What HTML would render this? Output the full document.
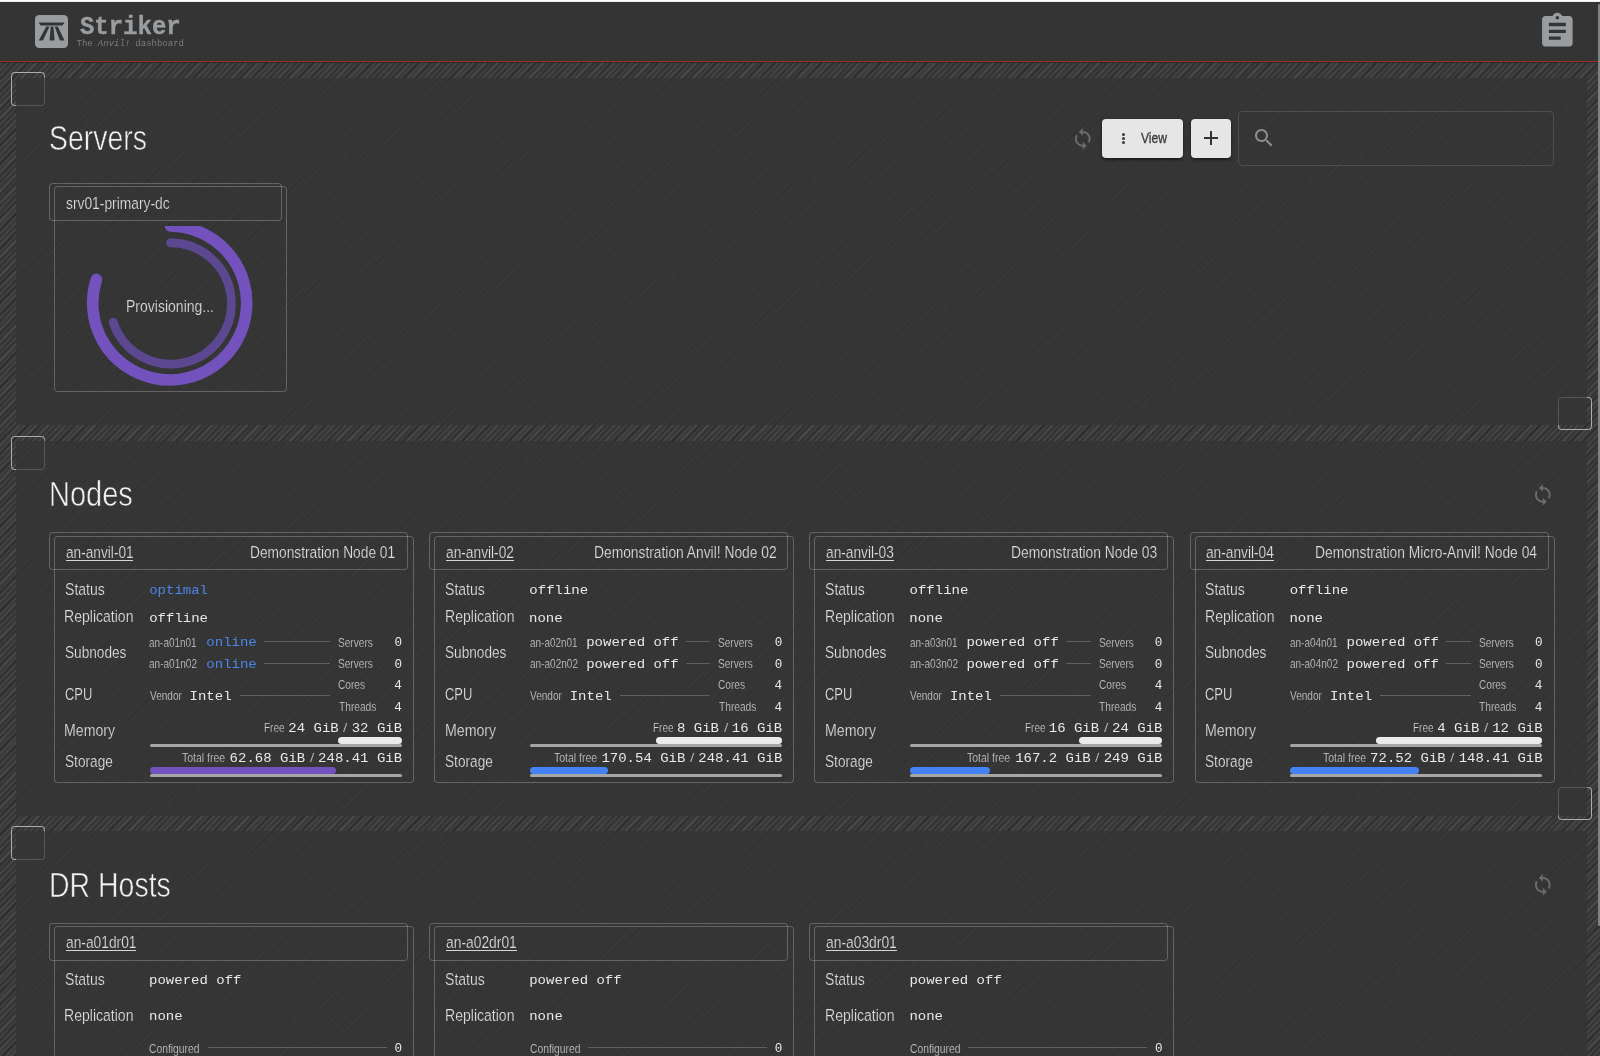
<!DOCTYPE html>
<html lang="en"><head><meta charset="utf-8"><title>Striker - Dashboard</title>
<style>
:root{--pbg:#353535}
html,body{margin:0;padding:0;background:#383838;}
body{width:1600px;height:1056px;overflow:hidden;position:relative;font-family:"Liberation Sans",sans-serif;}
#root{position:absolute;left:0;top:0;width:1600px;height:1056px;overflow:hidden;will-change:transform;}
#root>*{position:absolute;}
#stripes{left:0;top:0;width:1600px;height:1056px;
 background:
  repeating-linear-gradient(138deg, rgba(255,255,255,0.03) 0, rgba(0,0,0,0.045) 3.7px, rgba(255,255,255,0.03) 7.9px),
  repeating-linear-gradient(131deg, rgba(255,255,255,0.03) 0, rgba(0,0,0,0.07) 5.5px, rgba(255,255,255,0.03) 11.3px),
  repeating-linear-gradient(134deg, #2f2f2f 0, #313131 1.1px, #434343 2.3px, #414141 2.9px, #2f2f2f 4.2px);}
.panel{background:rgba(52,52,52,0.84);}
.sq{box-sizing:border-box;width:34px;height:34px;border:1px solid rgba(255,255,255,0.17);border-radius:3.5px;}
.sq.b{border-color:#adadad;}
#hdr{left:0;top:2px;width:1600px;height:59px;background:#343434;}
#redline{left:0;top:61px;width:1600px;height:2.4px;background:linear-gradient(#a72d2b 0,#a72d2b 1.1px,#202626 1.3px,rgba(32,38,38,0) 2.4px);}
#topwhite{left:0;top:0;width:1600px;height:2px;background:linear-gradient(#fff 0,#fff 1.4px,#9b9b9b 2px);}
#logo{left:35px;top:15px;}
.t{white-space:pre;display:block;font-family:"Liberation Sans",sans-serif;}
.t.m{font-family:"Liberation Mono","Liberation Sans",sans-serif;}
.ul{height:1px;background:#d6d6d6;}
.hv{-webkit-text-stroke:0.35px #3d3d3d;}
.cb{box-sizing:border-box;border:1px solid rgba(255,255,255,0.235);border-radius:3.5px;}
.ln{background:#606060;}
.gbar{background:#a6a6a6;border-radius:2px;}
.wbar{background:#ebebeb;border-radius:3.5px;}
.btn{background:#e6e6e6;border-radius:4px;box-shadow:0 2px 2px rgba(0,0,0,0.35),0 1px 4px rgba(0,0,0,0.25);}
.dot{width:3.1px;height:3.1px;border-radius:50%;background:#3a3a3a;}
.plus{background:#333;}
.field{box-sizing:border-box;border:1px solid #4e4e4e;border-radius:4px;}
#sb{left:1597.6px;top:4px;width:2.4px;height:922.4px;background:#808486;border-radius:1.5px 0 0 1.5px;}
</style></head>
<body><div id="root">
<div id="stripes"></div>
<div class="panel" style="left:16.0px;top:77.5px;width:1571.20px;height:347.50px"></div>
<div class="panel" style="left:16.0px;top:440.6px;width:1571.20px;height:375.00px"></div>
<div class="panel" style="left:16.0px;top:831.25px;width:1571.20px;height:268.75px"></div>
<div class="sq" style="left:11px;top:72px"></div>
<div class="sq b" style="left:11px;top:72px;clip-path:polygon(0 0,100% 0,100% 5.50px,5.00px 5.50px,5.00px 100%,0 100%)"></div>
<div class="sq" style="left:1558px;top:397px;height:33px"></div>
<div class="sq b" style="left:1558px;top:397px;height:33px;clip-path:polygon(100% 0,100% 100%,0 100%,0 28.00px,29.20px 28.00px,29.20px 0)"></div>
<div class="sq" style="left:11px;top:436px"></div>
<div class="sq b" style="left:11px;top:436px;clip-path:polygon(0 0,100% 0,100% 4.60px,5.00px 4.60px,5.00px 100%,0 100%)"></div>
<div class="sq" style="left:1558px;top:787px;height:33px"></div>
<div class="sq b" style="left:1558px;top:787px;height:33px;clip-path:polygon(100% 0,100% 100%,0 100%,0 28.60px,29.20px 28.60px,29.20px 0)"></div>
<div class="sq" style="left:11px;top:826px"></div>
<div class="sq b" style="left:11px;top:826px;clip-path:polygon(0 0,100% 0,100% 5.25px,5.00px 5.25px,5.00px 100%,0 100%)"></div>
<div id="hdr"></div><div id="redline"></div><div id="topwhite"></div>
<svg id="logo" viewBox="0 0 33 33" width="33" height="33"><rect x="0" y="0" width="33" height="33" rx="4.2" fill="#9a9da0"/>
<path d="M3.6 7.6h25.9l-2.1 2.9H5.7z M11.3 11.6h3.2L7.9 25.4H3.7z M15.7 11.6h2.8l1.1 13.8h-5z M19.7 11.6h3.1l6.7 13.8h-4.6z" fill="#343434"/></svg>
<span class="t m" style="font-size:24px;line-height:27px;top:14.40px;color:#9a9da0;left:79.90px;font-weight:bold;-webkit-text-stroke:0.4px #9a9da0;transform:scaleY(1.08);transform-origin:0 20px;">Striker</span>
<span class="t m" style="font-size:9px;line-height:10px;top:39.00px;color:#7b7d80;left:76.50px;">The</span>
<span class="t m" style="font-size:9px;line-height:10px;top:39.00px;color:#7b7d80;left:97.85px;font-style:italic;">Anvil!</span>
<span class="t m" style="font-size:9px;line-height:10px;top:39.00px;color:#7b7d80;left:135.35px;">dashboard</span>
<svg class="ic" style="left:1537.4px;top:11.3px" width="40.7" height="40.7" viewBox="0 0 24 24"><path fill="#9a9da0" d="M19 3h-4.180C14.400 1.840 13.300 1 12 1c-1.300 0-2.400.840-2.820 2H5c-1.100 0-2 .900-2 2v14c0 1.100.900 2 2 2h14c1.100 0 2-.900 2-2V5c0-1.100-.900-2-2-2zm-7 0c.550 0 1 .450 1 1s-.450 1-1 1-1-.450-1-1 .450-1 1-1zm2 14H7v-2h7v2zm3-4H7v-2h10v2zm0-4H7V7h10v2z"/></svg>
<span class="t " style="font-size:35.12px;line-height:39px;top:117.75px;color:#f0f0f0;left:48.71px;transform:scaleX(0.8091);transform-origin:0 0;-webkit-text-stroke:0.6px var(--pbg);">Servers</span>
<svg class="ic" style="left:1070.70px;top:126.60px" width="23.6" height="23.6" viewBox="0 0 24 24"><path fill="#6b6b6b" d="M12 4V1L8 5l4 4V6c3.31 0 6 2.69 6 6 0 1.01-.25 1.97-.7 2.8l1.46 1.46C19.54 15.03 20 13.57 20 12c0-4.42-3.58-8-8-8zm0 14c-3.31 0-6-2.69-6-6 0-1.01.25-1.97.7-2.8L5.24 7.74C4.46 8.970 4 10.430 4 12c0 4.420 3.580 8 8 8v3l4-4-4-4v3z"/></svg>
<div class="btn" style="left:1102px;top:119px;width:81.2px;height:39.2px"></div>
<div class="btn" style="left:1191.2px;top:119px;width:39.8px;height:39.2px"></div>
<div class="dot" style="left:1121.95px;top:133.05px"></div>
<div class="dot" style="left:1121.95px;top:136.85px"></div>
<div class="dot" style="left:1121.95px;top:140.65px"></div>
<span class="t hv" style="font-size:14.05px;line-height:16px;top:130.00px;color:#3d3d3d;left:1141.46px;transform:scaleX(0.8609);transform-origin:0 0;">View</span>
<div class="plus" style="left:1204.3px;top:137.4px;width:14px;height:2px"></div>
<div class="plus" style="left:1210.3px;top:131.4px;width:2px;height:14px"></div>
<div class="field" style="left:1237.6px;top:110.6px;width:316.8px;height:55.2px"></div>
<svg class="ic" style="left:1252px;top:126.3px" width="24" height="24" viewBox="0 0 24 24"><path fill="#8c8c8c" d="M15.5 14h-.79l-.28-.27C15.41 12.59 16 11.11 16 9.5 16 5.91 13.09 3 9.5 3S3 5.91 3 9.5 5.91 16 9.5 16c1.61 0 3.09-.59 4.23-1.57l.27.28v.79l5 4.990L20.490 19l-4.990-5zm-6 0C7.010 14 5 11.990 5 9.500S7.010 5 9.500 5 14 7.010 14 9.500 11.990 14 9.500 14z"/></svg>
<div class="cb" style="left:54px;top:186px;width:233px;height:206px"></div>
<div class="cb" style="left:49px;top:183px;width:233px;height:38px"></div>
<span class="t " style="font-size:16.53px;line-height:19px;top:193.50px;color:#dedede;left:66.12px;transform:scaleX(0.8372);transform-origin:0 0;-webkit-text-stroke:0.2px var(--pbg);">srv01-primary-dc</span>
<span class="t " style="font-size:16.53px;line-height:19px;top:296.60px;color:#dedede;left:126.15px;transform:scaleX(0.8485);transform-origin:0 0;-webkit-text-stroke:0.2px var(--pbg);">Provisioning...</span>
<svg class="ic" style="left:60px;top:226.2px" width="222" height="165" viewBox="60 226.2 222 165">
<path d="M 170.6 226.2 A 77.0 77.0 0 1 1 96.4 279.6" fill="none" stroke="#7452bd" stroke-width="11.6" stroke-linecap="round"/>
<path d="M 170.4 243.1 A 60.6 60.6 0 1 1 113.2 322.4" fill="none" stroke="#5c4791" stroke-width="8.8" stroke-linecap="round"/>
</svg>
<span class="t " style="font-size:35.12px;line-height:39px;top:474.00px;color:#f0f0f0;left:48.64px;transform:scaleX(0.8265);transform-origin:0 0;-webkit-text-stroke:0.6px var(--pbg);">Nodes</span>
<svg class="ic" style="left:1530.50px;top:483.20px" width="23.6" height="23.6" viewBox="0 0 24 24"><path fill="#6b6b6b" d="M12 4V1L8 5l4 4V6c3.31 0 6 2.69 6 6 0 1.01-.25 1.97-.7 2.8l1.46 1.46C19.54 15.03 20 13.57 20 12c0-4.42-3.58-8-8-8zm0 14c-3.31 0-6-2.69-6-6 0-1.01.25-1.97.7-2.8L5.24 7.74C4.46 8.970 4 10.430 4 12c0 4.420 3.580 8 8 8v3l4-4-4-4v3z"/></svg>
<div class="cb" style="left:54px;top:536px;width:360px;height:247px"></div>
<div class="cb" style="left:49px;top:532px;width:359px;height:38px"></div>
<span class="t " style="font-size:16.53px;line-height:19px;top:543.00px;color:#dedede;left:65.67px;transform:scaleX(0.8281);transform-origin:0 0;-webkit-text-stroke:0.2px var(--pbg);">an-anvil-01</span>
<div class="ul" style="left:65.95px;top:559.70px;width:67.30px"></div>
<span class="t " style="font-size:16.53px;line-height:19px;top:543.00px;color:#dedede;left:250.38px;transform:scaleX(0.8321);transform-origin:0 0;-webkit-text-stroke:0.2px var(--pbg);">Demonstration Node 01</span>
<span class="t " style="font-size:16.53px;line-height:19px;top:579.60px;color:#dedede;left:64.96px;transform:scaleX(0.8518);transform-origin:0 0;-webkit-text-stroke:0.2px var(--pbg);">Status</span>
<span class="t " style="font-size:16.53px;line-height:19px;top:606.75px;color:#dedede;left:64.45px;transform:scaleX(0.8501);transform-origin:0 0;-webkit-text-stroke:0.2px var(--pbg);">Replication</span>
<span class="t " style="font-size:16.53px;line-height:19px;top:642.50px;color:#dedede;left:64.98px;transform:scaleX(0.8257);transform-origin:0 0;-webkit-text-stroke:0.2px var(--pbg);">Subnodes</span>
<span class="t " style="font-size:16.53px;line-height:19px;top:685.00px;color:#dedede;left:64.94px;transform:scaleX(0.7820);transform-origin:0 0;-webkit-text-stroke:0.2px var(--pbg);">CPU</span>
<span class="t " style="font-size:16.53px;line-height:19px;top:721.25px;color:#dedede;left:64.44px;transform:scaleX(0.8569);transform-origin:0 0;-webkit-text-stroke:0.2px var(--pbg);">Memory</span>
<span class="t " style="font-size:16.53px;line-height:19px;top:752.00px;color:#dedede;left:64.98px;transform:scaleX(0.8271);transform-origin:0 0;-webkit-text-stroke:0.2px var(--pbg);">Storage</span>
<span class="t m" style="font-size:14px;line-height:16px;top:581.90px;color:#4a86e8;left:149.20px;transform:scaleY(0.965);transform-origin:0 12px;">optimal</span>
<span class="t m" style="font-size:14px;line-height:16px;top:609.60px;color:#e9e9e9;left:149.20px;transform:scaleY(0.965);transform-origin:0 12px;">offline</span>
<span class="t " style="font-size:12.4px;line-height:14px;top:635.50px;color:#d0d0d0;left:149.35px;transform:translateY(0.45px) scaleX(0.8033);transform-origin:0 0;-webkit-text-stroke:0.22px var(--pbg);">an-a01n01</span>
<span class="t m" style="font-size:14px;line-height:16px;top:634.30px;color:#4a86e8;left:206.35px;transform:scaleY(0.965);transform-origin:0 12px;">online</span>
<div class="ln" style="left:264.00px;top:641.10px;width:66.30px;height:1.00px;"></div>
<span class="t " style="font-size:12.4px;line-height:14px;top:635.50px;color:#d0d0d0;left:338.30px;transform:translateY(0.45px) scaleX(0.8153);transform-origin:0 0;-webkit-text-stroke:0.22px var(--pbg);">Servers</span>
<span class="t m" style="font-size:12.6px;line-height:14px;top:636.30px;color:#e9e9e9;right:1197.94px;">0</span>
<span class="t " style="font-size:12.4px;line-height:14px;top:656.70px;color:#d0d0d0;left:149.34px;transform:translateY(0.45px) scaleX(0.8101);transform-origin:0 0;-webkit-text-stroke:0.22px var(--pbg);">an-a01n02</span>
<span class="t m" style="font-size:14px;line-height:16px;top:655.50px;color:#4a86e8;left:206.35px;transform:scaleY(0.965);transform-origin:0 12px;">online</span>
<div class="ln" style="left:264.00px;top:663.00px;width:66.30px;height:1.00px;"></div>
<span class="t " style="font-size:12.4px;line-height:14px;top:656.70px;color:#d0d0d0;left:338.30px;transform:translateY(0.45px) scaleX(0.8153);transform-origin:0 0;-webkit-text-stroke:0.22px var(--pbg);">Servers</span>
<span class="t m" style="font-size:12.6px;line-height:14px;top:657.50px;color:#e9e9e9;right:1197.94px;">0</span>
<span class="t " style="font-size:12.4px;line-height:14px;top:688.60px;color:#d0d0d0;left:149.71px;transform:translateY(0.45px) scaleX(0.8131);transform-origin:0 0;-webkit-text-stroke:0.22px var(--pbg);">Vendor</span>
<span class="t m" style="font-size:14px;line-height:16px;top:687.60px;color:#e9e9e9;left:189.55px;transform:scaleY(0.965);transform-origin:0 12px;">Intel</span>
<div class="ln" style="left:239.50px;top:694.90px;width:90.80px;height:1.00px;"></div>
<span class="t " style="font-size:12.4px;line-height:14px;top:678.00px;color:#d0d0d0;left:338.26px;transform:translateY(0.45px) scaleX(0.8190);transform-origin:0 0;-webkit-text-stroke:0.22px var(--pbg);">Cores</span>
<span class="t m" style="font-size:12.6px;line-height:14px;top:678.80px;color:#e9e9e9;right:1198.09px;">4</span>
<span class="t " style="font-size:12.4px;line-height:14px;top:699.90px;color:#d0d0d0;left:338.54px;transform:translateY(0.45px) scaleX(0.8225);transform-origin:0 0;-webkit-text-stroke:0.22px var(--pbg);">Threads</span>
<span class="t m" style="font-size:12.6px;line-height:14px;top:700.70px;color:#e9e9e9;right:1198.09px;">4</span>
<span class="t m" style="font-size:14px;line-height:16px;top:719.60px;color:#e9e9e9;right:1197.89px;transform:scaleY(0.965);transform-origin:0 12px;">32 GiB</span>
<span class="t " style="font-size:12.4px;line-height:14px;top:720.60px;color:#d0d0d0;left:343.30px;transform:translateY(0.45px) scaleX(1.2464);transform-origin:0 0;-webkit-text-stroke:0.22px var(--pbg);">/</span>
<span class="t m" style="font-size:14px;line-height:16px;top:719.60px;color:#e9e9e9;right:1261.29px;transform:scaleY(0.965);transform-origin:0 12px;">24 GiB</span>
<span class="t " style="font-size:12.4px;line-height:14px;top:720.60px;color:#d0d0d0;left:264.30px;transform:translateY(0.45px) scaleX(0.8017);transform-origin:0 0;-webkit-text-stroke:0.22px var(--pbg);">Free</span>
<div class="gbar" style="left:149.75px;top:743.75px;width:251.90px;height:3.25px;"></div>
<div class="wbar" style="left:338.20px;top:737.00px;width:63.50px;height:6.90px;"></div>
<span class="t m" style="font-size:14px;line-height:16px;top:749.70px;color:#e9e9e9;right:1197.88px;transform:scaleY(0.965);transform-origin:0 12px;">248.41 GiB</span>
<span class="t " style="font-size:12.4px;line-height:14px;top:750.70px;color:#d0d0d0;left:309.80px;transform:translateY(0.45px) scaleX(1.2464);transform-origin:0 0;-webkit-text-stroke:0.22px var(--pbg);">/</span>
<span class="t m" style="font-size:14px;line-height:16px;top:749.70px;color:#e9e9e9;right:1294.79px;transform:scaleY(0.965);transform-origin:0 12px;">62.68 GiB</span>
<span class="t " style="font-size:12.4px;line-height:14px;top:750.70px;color:#d0d0d0;left:181.94px;transform:translateY(0.45px) scaleX(0.8466);transform-origin:0 0;-webkit-text-stroke:0.22px var(--pbg);">Total free</span>
<div class="gbar" style="left:149.75px;top:773.75px;width:251.90px;height:3.25px;"></div>
<div class="wbar" style="left:149.75px;top:767.20px;width:186.50px;height:6.70px;background:#7452bd"></div>
<div class="cb" style="left:434px;top:536px;width:360px;height:247px"></div>
<div class="cb" style="left:429px;top:532px;width:359px;height:38px"></div>
<span class="t " style="font-size:16.53px;line-height:19px;top:543.00px;color:#dedede;left:445.84px;transform:scaleX(0.8319);transform-origin:0 0;-webkit-text-stroke:0.2px var(--pbg);">an-anvil-02</span>
<div class="ul" style="left:446.12px;top:559.70px;width:67.60px"></div>
<span class="t " style="font-size:16.53px;line-height:19px;top:543.00px;color:#dedede;left:593.77px;transform:scaleX(0.8358);transform-origin:0 0;-webkit-text-stroke:0.2px var(--pbg);">Demonstration Anvil! Node 02</span>
<span class="t " style="font-size:16.53px;line-height:19px;top:579.60px;color:#dedede;left:445.13px;transform:scaleX(0.8518);transform-origin:0 0;-webkit-text-stroke:0.2px var(--pbg);">Status</span>
<span class="t " style="font-size:16.53px;line-height:19px;top:606.75px;color:#dedede;left:444.62px;transform:scaleX(0.8501);transform-origin:0 0;-webkit-text-stroke:0.2px var(--pbg);">Replication</span>
<span class="t " style="font-size:16.53px;line-height:19px;top:642.50px;color:#dedede;left:445.15px;transform:scaleX(0.8257);transform-origin:0 0;-webkit-text-stroke:0.2px var(--pbg);">Subnodes</span>
<span class="t " style="font-size:16.53px;line-height:19px;top:685.00px;color:#dedede;left:445.11px;transform:scaleX(0.7820);transform-origin:0 0;-webkit-text-stroke:0.2px var(--pbg);">CPU</span>
<span class="t " style="font-size:16.53px;line-height:19px;top:721.25px;color:#dedede;left:444.61px;transform:scaleX(0.8569);transform-origin:0 0;-webkit-text-stroke:0.2px var(--pbg);">Memory</span>
<span class="t " style="font-size:16.53px;line-height:19px;top:752.00px;color:#dedede;left:445.15px;transform:scaleX(0.8271);transform-origin:0 0;-webkit-text-stroke:0.2px var(--pbg);">Storage</span>
<span class="t m" style="font-size:14px;line-height:16px;top:581.90px;color:#e9e9e9;left:529.37px;transform:scaleY(0.965);transform-origin:0 12px;">offline</span>
<span class="t m" style="font-size:14px;line-height:16px;top:609.60px;color:#e9e9e9;left:529.07px;transform:scaleY(0.965);transform-origin:0 12px;">none</span>
<span class="t " style="font-size:12.4px;line-height:14px;top:635.50px;color:#d0d0d0;left:529.52px;transform:translateY(0.45px) scaleX(0.8033);transform-origin:0 0;-webkit-text-stroke:0.22px var(--pbg);">an-a02n01</span>
<span class="t m" style="font-size:14px;line-height:16px;top:634.30px;color:#e9e9e9;left:586.22px;transform:scaleY(0.965);transform-origin:0 12px;">powered off</span>
<div class="ln" style="left:686.07px;top:641.10px;width:24.40px;height:1.00px;"></div>
<span class="t " style="font-size:12.4px;line-height:14px;top:635.50px;color:#d0d0d0;left:718.47px;transform:translateY(0.45px) scaleX(0.8153);transform-origin:0 0;-webkit-text-stroke:0.22px var(--pbg);">Servers</span>
<span class="t m" style="font-size:12.6px;line-height:14px;top:636.30px;color:#e9e9e9;right:817.77px;">0</span>
<span class="t " style="font-size:12.4px;line-height:14px;top:656.70px;color:#d0d0d0;left:529.51px;transform:translateY(0.45px) scaleX(0.8101);transform-origin:0 0;-webkit-text-stroke:0.22px var(--pbg);">an-a02n02</span>
<span class="t m" style="font-size:14px;line-height:16px;top:655.50px;color:#e9e9e9;left:586.22px;transform:scaleY(0.965);transform-origin:0 12px;">powered off</span>
<div class="ln" style="left:686.07px;top:663.00px;width:24.40px;height:1.00px;"></div>
<span class="t " style="font-size:12.4px;line-height:14px;top:656.70px;color:#d0d0d0;left:718.47px;transform:translateY(0.45px) scaleX(0.8153);transform-origin:0 0;-webkit-text-stroke:0.22px var(--pbg);">Servers</span>
<span class="t m" style="font-size:12.6px;line-height:14px;top:657.50px;color:#e9e9e9;right:817.77px;">0</span>
<span class="t " style="font-size:12.4px;line-height:14px;top:688.60px;color:#d0d0d0;left:529.88px;transform:translateY(0.45px) scaleX(0.8131);transform-origin:0 0;-webkit-text-stroke:0.22px var(--pbg);">Vendor</span>
<span class="t m" style="font-size:14px;line-height:16px;top:687.60px;color:#e9e9e9;left:569.72px;transform:scaleY(0.965);transform-origin:0 12px;">Intel</span>
<div class="ln" style="left:619.67px;top:694.90px;width:90.80px;height:1.00px;"></div>
<span class="t " style="font-size:12.4px;line-height:14px;top:678.00px;color:#d0d0d0;left:718.43px;transform:translateY(0.45px) scaleX(0.8190);transform-origin:0 0;-webkit-text-stroke:0.22px var(--pbg);">Cores</span>
<span class="t m" style="font-size:12.6px;line-height:14px;top:678.80px;color:#e9e9e9;right:817.92px;">4</span>
<span class="t " style="font-size:12.4px;line-height:14px;top:699.90px;color:#d0d0d0;left:718.71px;transform:translateY(0.45px) scaleX(0.8225);transform-origin:0 0;-webkit-text-stroke:0.22px var(--pbg);">Threads</span>
<span class="t m" style="font-size:12.6px;line-height:14px;top:700.70px;color:#e9e9e9;right:817.92px;">4</span>
<span class="t m" style="font-size:14px;line-height:16px;top:719.60px;color:#e9e9e9;right:817.72px;transform:scaleY(0.965);transform-origin:0 12px;">16 GiB</span>
<span class="t " style="font-size:12.4px;line-height:14px;top:720.60px;color:#d0d0d0;left:723.57px;transform:translateY(0.45px) scaleX(1.2464);transform-origin:0 0;-webkit-text-stroke:0.22px var(--pbg);">/</span>
<span class="t m" style="font-size:14px;line-height:16px;top:719.60px;color:#e9e9e9;right:881.02px;transform:scaleY(0.965);transform-origin:0 12px;">8 GiB</span>
<span class="t " style="font-size:12.4px;line-height:14px;top:720.60px;color:#d0d0d0;left:652.87px;transform:translateY(0.45px) scaleX(0.8017);transform-origin:0 0;-webkit-text-stroke:0.22px var(--pbg);">Free</span>
<div class="gbar" style="left:529.92px;top:743.75px;width:251.90px;height:3.25px;"></div>
<div class="wbar" style="left:656.37px;top:737.00px;width:125.50px;height:6.90px;"></div>
<span class="t m" style="font-size:14px;line-height:16px;top:749.70px;color:#e9e9e9;right:817.71px;transform:scaleY(0.965);transform-origin:0 12px;">248.41 GiB</span>
<span class="t " style="font-size:12.4px;line-height:14px;top:750.70px;color:#d0d0d0;left:689.97px;transform:translateY(0.45px) scaleX(1.2464);transform-origin:0 0;-webkit-text-stroke:0.22px var(--pbg);">/</span>
<span class="t m" style="font-size:14px;line-height:16px;top:749.70px;color:#e9e9e9;right:914.61px;transform:scaleY(0.965);transform-origin:0 12px;">170.54 GiB</span>
<span class="t " style="font-size:12.4px;line-height:14px;top:750.70px;color:#d0d0d0;left:553.66px;transform:translateY(0.45px) scaleX(0.8466);transform-origin:0 0;-webkit-text-stroke:0.22px var(--pbg);">Total free</span>
<div class="gbar" style="left:529.92px;top:773.75px;width:251.90px;height:3.25px;"></div>
<div class="wbar" style="left:529.92px;top:767.20px;width:78.40px;height:6.70px;background:#4583f5"></div>
<div class="cb" style="left:814px;top:536px;width:360px;height:247px"></div>
<div class="cb" style="left:809px;top:532px;width:359px;height:38px"></div>
<span class="t " style="font-size:16.53px;line-height:19px;top:543.00px;color:#dedede;left:826.01px;transform:scaleX(0.8308);transform-origin:0 0;-webkit-text-stroke:0.2px var(--pbg);">an-anvil-03</span>
<div class="ul" style="left:826.29px;top:559.70px;width:67.60px"></div>
<span class="t " style="font-size:16.53px;line-height:19px;top:543.00px;color:#dedede;left:1010.67px;transform:scaleX(0.8380);transform-origin:0 0;-webkit-text-stroke:0.2px var(--pbg);">Demonstration Node 03</span>
<span class="t " style="font-size:16.53px;line-height:19px;top:579.60px;color:#dedede;left:825.30px;transform:scaleX(0.8518);transform-origin:0 0;-webkit-text-stroke:0.2px var(--pbg);">Status</span>
<span class="t " style="font-size:16.53px;line-height:19px;top:606.75px;color:#dedede;left:824.79px;transform:scaleX(0.8501);transform-origin:0 0;-webkit-text-stroke:0.2px var(--pbg);">Replication</span>
<span class="t " style="font-size:16.53px;line-height:19px;top:642.50px;color:#dedede;left:825.32px;transform:scaleX(0.8257);transform-origin:0 0;-webkit-text-stroke:0.2px var(--pbg);">Subnodes</span>
<span class="t " style="font-size:16.53px;line-height:19px;top:685.00px;color:#dedede;left:825.28px;transform:scaleX(0.7820);transform-origin:0 0;-webkit-text-stroke:0.2px var(--pbg);">CPU</span>
<span class="t " style="font-size:16.53px;line-height:19px;top:721.25px;color:#dedede;left:824.78px;transform:scaleX(0.8569);transform-origin:0 0;-webkit-text-stroke:0.2px var(--pbg);">Memory</span>
<span class="t " style="font-size:16.53px;line-height:19px;top:752.00px;color:#dedede;left:825.32px;transform:scaleX(0.8271);transform-origin:0 0;-webkit-text-stroke:0.2px var(--pbg);">Storage</span>
<span class="t m" style="font-size:14px;line-height:16px;top:581.90px;color:#e9e9e9;left:909.54px;transform:scaleY(0.965);transform-origin:0 12px;">offline</span>
<span class="t m" style="font-size:14px;line-height:16px;top:609.60px;color:#e9e9e9;left:909.24px;transform:scaleY(0.965);transform-origin:0 12px;">none</span>
<span class="t " style="font-size:12.4px;line-height:14px;top:635.50px;color:#d0d0d0;left:909.69px;transform:translateY(0.45px) scaleX(0.8033);transform-origin:0 0;-webkit-text-stroke:0.22px var(--pbg);">an-a03n01</span>
<span class="t m" style="font-size:14px;line-height:16px;top:634.30px;color:#e9e9e9;left:966.39px;transform:scaleY(0.965);transform-origin:0 12px;">powered off</span>
<div class="ln" style="left:1066.24px;top:641.10px;width:24.40px;height:1.00px;"></div>
<span class="t " style="font-size:12.4px;line-height:14px;top:635.50px;color:#d0d0d0;left:1098.64px;transform:translateY(0.45px) scaleX(0.8153);transform-origin:0 0;-webkit-text-stroke:0.22px var(--pbg);">Servers</span>
<span class="t m" style="font-size:12.6px;line-height:14px;top:636.30px;color:#e9e9e9;right:437.60px;">0</span>
<span class="t " style="font-size:12.4px;line-height:14px;top:656.70px;color:#d0d0d0;left:909.68px;transform:translateY(0.45px) scaleX(0.8101);transform-origin:0 0;-webkit-text-stroke:0.22px var(--pbg);">an-a03n02</span>
<span class="t m" style="font-size:14px;line-height:16px;top:655.50px;color:#e9e9e9;left:966.39px;transform:scaleY(0.965);transform-origin:0 12px;">powered off</span>
<div class="ln" style="left:1066.24px;top:663.00px;width:24.40px;height:1.00px;"></div>
<span class="t " style="font-size:12.4px;line-height:14px;top:656.70px;color:#d0d0d0;left:1098.64px;transform:translateY(0.45px) scaleX(0.8153);transform-origin:0 0;-webkit-text-stroke:0.22px var(--pbg);">Servers</span>
<span class="t m" style="font-size:12.6px;line-height:14px;top:657.50px;color:#e9e9e9;right:437.60px;">0</span>
<span class="t " style="font-size:12.4px;line-height:14px;top:688.60px;color:#d0d0d0;left:910.05px;transform:translateY(0.45px) scaleX(0.8131);transform-origin:0 0;-webkit-text-stroke:0.22px var(--pbg);">Vendor</span>
<span class="t m" style="font-size:14px;line-height:16px;top:687.60px;color:#e9e9e9;left:949.89px;transform:scaleY(0.965);transform-origin:0 12px;">Intel</span>
<div class="ln" style="left:999.84px;top:694.90px;width:90.80px;height:1.00px;"></div>
<span class="t " style="font-size:12.4px;line-height:14px;top:678.00px;color:#d0d0d0;left:1098.60px;transform:translateY(0.45px) scaleX(0.8190);transform-origin:0 0;-webkit-text-stroke:0.22px var(--pbg);">Cores</span>
<span class="t m" style="font-size:12.6px;line-height:14px;top:678.80px;color:#e9e9e9;right:437.75px;">4</span>
<span class="t " style="font-size:12.4px;line-height:14px;top:699.90px;color:#d0d0d0;left:1098.88px;transform:translateY(0.45px) scaleX(0.8225);transform-origin:0 0;-webkit-text-stroke:0.22px var(--pbg);">Threads</span>
<span class="t m" style="font-size:12.6px;line-height:14px;top:700.70px;color:#e9e9e9;right:437.75px;">4</span>
<span class="t m" style="font-size:14px;line-height:16px;top:719.60px;color:#e9e9e9;right:437.55px;transform:scaleY(0.965);transform-origin:0 12px;">24 GiB</span>
<span class="t " style="font-size:12.4px;line-height:14px;top:720.60px;color:#d0d0d0;left:1103.74px;transform:translateY(0.45px) scaleX(1.2464);transform-origin:0 0;-webkit-text-stroke:0.22px var(--pbg);">/</span>
<span class="t m" style="font-size:14px;line-height:16px;top:719.60px;color:#e9e9e9;right:500.85px;transform:scaleY(0.965);transform-origin:0 12px;">16 GiB</span>
<span class="t " style="font-size:12.4px;line-height:14px;top:720.60px;color:#d0d0d0;left:1024.74px;transform:translateY(0.45px) scaleX(0.8017);transform-origin:0 0;-webkit-text-stroke:0.22px var(--pbg);">Free</span>
<div class="gbar" style="left:910.09px;top:743.75px;width:251.90px;height:3.25px;"></div>
<div class="wbar" style="left:1078.64px;top:737.00px;width:83.40px;height:6.90px;"></div>
<span class="t m" style="font-size:14px;line-height:16px;top:749.70px;color:#e9e9e9;right:437.55px;transform:scaleY(0.965);transform-origin:0 12px;">249 GiB</span>
<span class="t " style="font-size:12.4px;line-height:14px;top:750.70px;color:#d0d0d0;left:1095.34px;transform:translateY(0.45px) scaleX(1.2464);transform-origin:0 0;-webkit-text-stroke:0.22px var(--pbg);">/</span>
<span class="t m" style="font-size:14px;line-height:16px;top:749.70px;color:#e9e9e9;right:509.25px;transform:scaleY(0.965);transform-origin:0 12px;">167.2 GiB</span>
<span class="t " style="font-size:12.4px;line-height:14px;top:750.70px;color:#d0d0d0;left:967.43px;transform:translateY(0.45px) scaleX(0.8466);transform-origin:0 0;-webkit-text-stroke:0.22px var(--pbg);">Total free</span>
<div class="gbar" style="left:910.09px;top:773.75px;width:251.90px;height:3.25px;"></div>
<div class="wbar" style="left:910.09px;top:767.20px;width:80.40px;height:6.70px;background:#4583f5"></div>
<div class="cb" style="left:1195px;top:536px;width:360px;height:247px"></div>
<div class="cb" style="left:1190px;top:532px;width:359px;height:38px"></div>
<span class="t " style="font-size:16.53px;line-height:19px;top:543.00px;color:#dedede;left:1206.18px;transform:scaleX(0.8300);transform-origin:0 0;-webkit-text-stroke:0.2px var(--pbg);">an-anvil-04</span>
<div class="ul" style="left:1206.46px;top:559.70px;width:67.70px"></div>
<span class="t " style="font-size:16.53px;line-height:19px;top:543.00px;color:#dedede;left:1315.12px;transform:scaleX(0.8369);transform-origin:0 0;-webkit-text-stroke:0.2px var(--pbg);">Demonstration Micro-Anvil! Node 04</span>
<span class="t " style="font-size:16.53px;line-height:19px;top:579.60px;color:#dedede;left:1205.47px;transform:scaleX(0.8518);transform-origin:0 0;-webkit-text-stroke:0.2px var(--pbg);">Status</span>
<span class="t " style="font-size:16.53px;line-height:19px;top:606.75px;color:#dedede;left:1204.96px;transform:scaleX(0.8501);transform-origin:0 0;-webkit-text-stroke:0.2px var(--pbg);">Replication</span>
<span class="t " style="font-size:16.53px;line-height:19px;top:642.50px;color:#dedede;left:1205.49px;transform:scaleX(0.8257);transform-origin:0 0;-webkit-text-stroke:0.2px var(--pbg);">Subnodes</span>
<span class="t " style="font-size:16.53px;line-height:19px;top:685.00px;color:#dedede;left:1205.45px;transform:scaleX(0.7820);transform-origin:0 0;-webkit-text-stroke:0.2px var(--pbg);">CPU</span>
<span class="t " style="font-size:16.53px;line-height:19px;top:721.25px;color:#dedede;left:1204.95px;transform:scaleX(0.8569);transform-origin:0 0;-webkit-text-stroke:0.2px var(--pbg);">Memory</span>
<span class="t " style="font-size:16.53px;line-height:19px;top:752.00px;color:#dedede;left:1205.49px;transform:scaleX(0.8271);transform-origin:0 0;-webkit-text-stroke:0.2px var(--pbg);">Storage</span>
<span class="t m" style="font-size:14px;line-height:16px;top:581.90px;color:#e9e9e9;left:1289.71px;transform:scaleY(0.965);transform-origin:0 12px;">offline</span>
<span class="t m" style="font-size:14px;line-height:16px;top:609.60px;color:#e9e9e9;left:1289.41px;transform:scaleY(0.965);transform-origin:0 12px;">none</span>
<span class="t " style="font-size:12.4px;line-height:14px;top:635.50px;color:#d0d0d0;left:1289.86px;transform:translateY(0.45px) scaleX(0.8033);transform-origin:0 0;-webkit-text-stroke:0.22px var(--pbg);">an-a04n01</span>
<span class="t m" style="font-size:14px;line-height:16px;top:634.30px;color:#e9e9e9;left:1346.56px;transform:scaleY(0.965);transform-origin:0 12px;">powered off</span>
<div class="ln" style="left:1446.41px;top:641.10px;width:24.40px;height:1.00px;"></div>
<span class="t " style="font-size:12.4px;line-height:14px;top:635.50px;color:#d0d0d0;left:1478.81px;transform:translateY(0.45px) scaleX(0.8153);transform-origin:0 0;-webkit-text-stroke:0.22px var(--pbg);">Servers</span>
<span class="t m" style="font-size:12.6px;line-height:14px;top:636.30px;color:#e9e9e9;right:57.43px;">0</span>
<span class="t " style="font-size:12.4px;line-height:14px;top:656.70px;color:#d0d0d0;left:1289.85px;transform:translateY(0.45px) scaleX(0.8101);transform-origin:0 0;-webkit-text-stroke:0.22px var(--pbg);">an-a04n02</span>
<span class="t m" style="font-size:14px;line-height:16px;top:655.50px;color:#e9e9e9;left:1346.56px;transform:scaleY(0.965);transform-origin:0 12px;">powered off</span>
<div class="ln" style="left:1446.41px;top:663.00px;width:24.40px;height:1.00px;"></div>
<span class="t " style="font-size:12.4px;line-height:14px;top:656.70px;color:#d0d0d0;left:1478.81px;transform:translateY(0.45px) scaleX(0.8153);transform-origin:0 0;-webkit-text-stroke:0.22px var(--pbg);">Servers</span>
<span class="t m" style="font-size:12.6px;line-height:14px;top:657.50px;color:#e9e9e9;right:57.43px;">0</span>
<span class="t " style="font-size:12.4px;line-height:14px;top:688.60px;color:#d0d0d0;left:1290.22px;transform:translateY(0.45px) scaleX(0.8131);transform-origin:0 0;-webkit-text-stroke:0.22px var(--pbg);">Vendor</span>
<span class="t m" style="font-size:14px;line-height:16px;top:687.60px;color:#e9e9e9;left:1330.06px;transform:scaleY(0.965);transform-origin:0 12px;">Intel</span>
<div class="ln" style="left:1380.01px;top:694.90px;width:90.80px;height:1.00px;"></div>
<span class="t " style="font-size:12.4px;line-height:14px;top:678.00px;color:#d0d0d0;left:1478.77px;transform:translateY(0.45px) scaleX(0.8190);transform-origin:0 0;-webkit-text-stroke:0.22px var(--pbg);">Cores</span>
<span class="t m" style="font-size:12.6px;line-height:14px;top:678.80px;color:#e9e9e9;right:57.58px;">4</span>
<span class="t " style="font-size:12.4px;line-height:14px;top:699.90px;color:#d0d0d0;left:1479.05px;transform:translateY(0.45px) scaleX(0.8225);transform-origin:0 0;-webkit-text-stroke:0.22px var(--pbg);">Threads</span>
<span class="t m" style="font-size:12.6px;line-height:14px;top:700.70px;color:#e9e9e9;right:57.58px;">4</span>
<span class="t m" style="font-size:14px;line-height:16px;top:719.60px;color:#e9e9e9;right:57.38px;transform:scaleY(0.965);transform-origin:0 12px;">12 GiB</span>
<span class="t " style="font-size:12.4px;line-height:14px;top:720.60px;color:#d0d0d0;left:1483.91px;transform:translateY(0.45px) scaleX(1.2464);transform-origin:0 0;-webkit-text-stroke:0.22px var(--pbg);">/</span>
<span class="t m" style="font-size:14px;line-height:16px;top:719.60px;color:#e9e9e9;right:120.68px;transform:scaleY(0.965);transform-origin:0 12px;">4 GiB</span>
<span class="t " style="font-size:12.4px;line-height:14px;top:720.60px;color:#d0d0d0;left:1413.01px;transform:translateY(0.45px) scaleX(0.8017);transform-origin:0 0;-webkit-text-stroke:0.22px var(--pbg);">Free</span>
<div class="gbar" style="left:1290.26px;top:743.75px;width:251.90px;height:3.25px;"></div>
<div class="wbar" style="left:1376.21px;top:737.00px;width:166.00px;height:6.90px;"></div>
<span class="t m" style="font-size:14px;line-height:16px;top:749.70px;color:#e9e9e9;right:57.37px;transform:scaleY(0.965);transform-origin:0 12px;">148.41 GiB</span>
<span class="t " style="font-size:12.4px;line-height:14px;top:750.70px;color:#d0d0d0;left:1450.31px;transform:translateY(0.45px) scaleX(1.2464);transform-origin:0 0;-webkit-text-stroke:0.22px var(--pbg);">/</span>
<span class="t m" style="font-size:14px;line-height:16px;top:749.70px;color:#e9e9e9;right:154.28px;transform:scaleY(0.965);transform-origin:0 12px;">72.52 GiB</span>
<span class="t " style="font-size:12.4px;line-height:14px;top:750.70px;color:#d0d0d0;left:1322.50px;transform:translateY(0.45px) scaleX(0.8466);transform-origin:0 0;-webkit-text-stroke:0.22px var(--pbg);">Total free</span>
<div class="gbar" style="left:1290.26px;top:773.75px;width:251.90px;height:3.25px;"></div>
<div class="wbar" style="left:1290.26px;top:767.20px;width:129.00px;height:6.70px;background:#4583f5"></div>
<span class="t " style="font-size:35.12px;line-height:39px;top:864.50px;color:#f0f0f0;left:48.94px;transform:scaleX(0.8108);transform-origin:0 0;-webkit-text-stroke:0.6px var(--pbg);">DR Hosts</span>
<svg class="ic" style="left:1530.60px;top:873.40px" width="23.6" height="23.6" viewBox="0 0 24 24"><path fill="#6b6b6b" d="M12 4V1L8 5l4 4V6c3.31 0 6 2.69 6 6 0 1.01-.25 1.97-.7 2.8l1.46 1.46C19.54 15.03 20 13.57 20 12c0-4.42-3.58-8-8-8zm0 14c-3.31 0-6-2.69-6-6 0-1.01.25-1.97.7-2.8L5.24 7.74C4.46 8.970 4 10.430 4 12c0 4.420 3.580 8 8 8v3l4-4-4-4v3z"/></svg>
<div class="cb" style="left:54px;top:926px;width:360px;height:175px"></div>
<div class="cb" style="left:49px;top:923px;width:359px;height:38px"></div>
<span class="t " style="font-size:16.53px;line-height:19px;top:933.00px;color:#dedede;left:65.72px;transform:scaleX(0.8344);transform-origin:0 0;-webkit-text-stroke:0.2px var(--pbg);">an-a01dr01</span>
<div class="ul" style="left:66.00px;top:949.70px;width:70.10px"></div>
<span class="t " style="font-size:16.53px;line-height:19px;top:969.60px;color:#dedede;left:64.96px;transform:scaleX(0.8518);transform-origin:0 0;-webkit-text-stroke:0.2px var(--pbg);">Status</span>
<span class="t m" style="font-size:14px;line-height:16px;top:972.30px;color:#e9e9e9;left:149.05px;transform:scaleY(0.965);transform-origin:0 12px;">powered off</span>
<span class="t " style="font-size:16.53px;line-height:19px;top:1005.60px;color:#dedede;left:64.45px;transform:scaleX(0.8501);transform-origin:0 0;-webkit-text-stroke:0.2px var(--pbg);">Replication</span>
<span class="t m" style="font-size:14px;line-height:16px;top:1008.00px;color:#e9e9e9;left:149.05px;transform:scaleY(0.965);transform-origin:0 12px;">none</span>
<span class="t " style="font-size:12.4px;line-height:14px;top:1042.20px;color:#d0d0d0;left:149.40px;transform:translateY(0.45px) scaleX(0.8321);transform-origin:0 0;-webkit-text-stroke:0.22px var(--pbg);">Configured</span>
<div class="ln" style="left:208.00px;top:1047.20px;width:178.90px;height:1.00px;"></div>
<span class="t m" style="font-size:12.6px;line-height:14px;top:1042.40px;color:#e9e9e9;right:1197.84px;">0</span>
<div class="cb" style="left:434px;top:926px;width:360px;height:175px"></div>
<div class="cb" style="left:429px;top:923px;width:359px;height:38px"></div>
<span class="t " style="font-size:16.53px;line-height:19px;top:933.00px;color:#dedede;left:445.88px;transform:scaleX(0.8380);transform-origin:0 0;-webkit-text-stroke:0.2px var(--pbg);">an-a02dr01</span>
<div class="ul" style="left:446.17px;top:949.70px;width:70.40px"></div>
<span class="t " style="font-size:16.53px;line-height:19px;top:969.60px;color:#dedede;left:445.13px;transform:scaleX(0.8518);transform-origin:0 0;-webkit-text-stroke:0.2px var(--pbg);">Status</span>
<span class="t m" style="font-size:14px;line-height:16px;top:972.30px;color:#e9e9e9;left:529.22px;transform:scaleY(0.965);transform-origin:0 12px;">powered off</span>
<span class="t " style="font-size:16.53px;line-height:19px;top:1005.60px;color:#dedede;left:444.62px;transform:scaleX(0.8501);transform-origin:0 0;-webkit-text-stroke:0.2px var(--pbg);">Replication</span>
<span class="t m" style="font-size:14px;line-height:16px;top:1008.00px;color:#e9e9e9;left:529.22px;transform:scaleY(0.965);transform-origin:0 12px;">none</span>
<span class="t " style="font-size:12.4px;line-height:14px;top:1042.20px;color:#d0d0d0;left:529.57px;transform:translateY(0.45px) scaleX(0.8321);transform-origin:0 0;-webkit-text-stroke:0.22px var(--pbg);">Configured</span>
<div class="ln" style="left:588.17px;top:1047.20px;width:178.90px;height:1.00px;"></div>
<span class="t m" style="font-size:12.6px;line-height:14px;top:1042.40px;color:#e9e9e9;right:817.67px;">0</span>
<div class="cb" style="left:814px;top:926px;width:360px;height:175px"></div>
<div class="cb" style="left:809px;top:923px;width:359px;height:38px"></div>
<span class="t " style="font-size:16.53px;line-height:19px;top:933.00px;color:#dedede;left:826.05px;transform:scaleX(0.8380);transform-origin:0 0;-webkit-text-stroke:0.2px var(--pbg);">an-a03dr01</span>
<div class="ul" style="left:826.34px;top:949.70px;width:70.40px"></div>
<span class="t " style="font-size:16.53px;line-height:19px;top:969.60px;color:#dedede;left:825.30px;transform:scaleX(0.8518);transform-origin:0 0;-webkit-text-stroke:0.2px var(--pbg);">Status</span>
<span class="t m" style="font-size:14px;line-height:16px;top:972.30px;color:#e9e9e9;left:909.39px;transform:scaleY(0.965);transform-origin:0 12px;">powered off</span>
<span class="t " style="font-size:16.53px;line-height:19px;top:1005.60px;color:#dedede;left:824.79px;transform:scaleX(0.8501);transform-origin:0 0;-webkit-text-stroke:0.2px var(--pbg);">Replication</span>
<span class="t m" style="font-size:14px;line-height:16px;top:1008.00px;color:#e9e9e9;left:909.39px;transform:scaleY(0.965);transform-origin:0 12px;">none</span>
<span class="t " style="font-size:12.4px;line-height:14px;top:1042.20px;color:#d0d0d0;left:909.74px;transform:translateY(0.45px) scaleX(0.8321);transform-origin:0 0;-webkit-text-stroke:0.22px var(--pbg);">Configured</span>
<div class="ln" style="left:968.34px;top:1047.20px;width:178.90px;height:1.00px;"></div>
<span class="t m" style="font-size:12.6px;line-height:14px;top:1042.40px;color:#e9e9e9;right:437.50px;">0</span>
<div id="sb"></div>
</div></body></html>
